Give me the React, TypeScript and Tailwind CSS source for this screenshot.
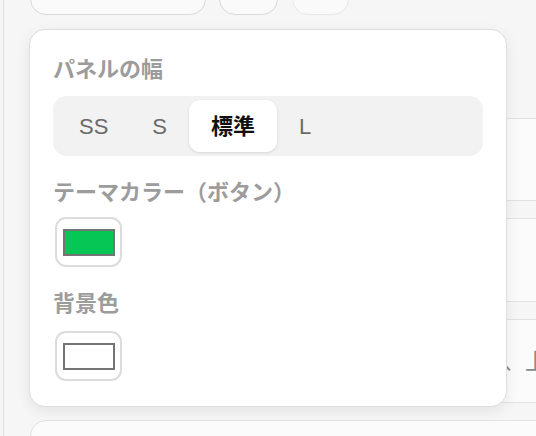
import React from 'react';

const SIZES = ['SS', 'S', '標準', 'L'];

const FONT = { fontFamily: '"Liberation Sans", "Noto Sans CJK JP", sans-serif' };

function Swatch({ color }: { color: string }) {
  return (
    <div className="ml-[2px] flex h-[50px] w-[67px] items-center justify-center rounded-[11px] border-2 border-[#dcdcdc] bg-white">
      <div className={`h-[27px] w-[52px] border-2 border-[#747474] ${color}`} />
    </div>
  );
}

export default function App() {
  const selected = '標準';

  return (
    <div className="relative h-[436px] w-[536px] overflow-hidden bg-[#f6f6f6] pl-[3px]" style={FONT}>
      {/* page behind the popover */}
      <div className="h-[436px] overflow-hidden border-l border-[#e0e0e0] pl-[26px]">
        <div className="-mt-[31px] flex">
          <div className="h-[46px] w-[176px] rounded-[16px] border border-[#d8d8d8] bg-[#fafafa]" />
          <div className="ml-[13px] h-[46px] w-[59px] rounded-[16px] border border-[#d8d8d8] bg-[#fafafa]" />
          <div className="ml-[14px] h-[46px] w-[57px] rounded-[16px] border border-[#e8e8e8] bg-[#fafafa]" />
        </div>
        <div className="mt-[103px] flex w-[560px] flex-col gap-[17px]">
          <div className="h-[83px] rounded-[16px] border border-[#e2e2e2] bg-[#fbfbfb]" />
          <div className="h-[84px] rounded-[16px] border border-[#e2e2e2] bg-[#fbfbfb]" />
          <div className="flex h-[84px] items-center rounded-[16px] border border-[#e2e2e2] bg-[#fbfbfb] pl-[56px]">
            <span className="whitespace-nowrap text-[22px] text-[#8a8a8a]">メッセージの表示や配色を自由に設定でき、上</span>
          </div>
          <div className="h-[84px] rounded-[16px] border border-[#e2e2e2] bg-[#fbfbfb]" />
        </div>
      </div>

      {/* popover */}
      <div className="absolute left-[29px] top-[29px] w-[478px] rounded-[16px] border border-[#dedede] bg-white px-[23px] pb-[25px] pt-[25px] shadow-[0_4px_14px_rgba(0,0,0,0.08)]">
        <p className="text-[22px] font-bold leading-[30px] text-[#9c9c9c]">パネルの幅</p>
        <div className="mt-[11px] flex h-[60px] rounded-[14px] bg-[#f2f2f2] p-[4px]">
          {SIZES.map((s) => (
            <button
              key={s}
              className={
                s === selected
                  ? 'flex h-[52px] items-center rounded-[11px] bg-white px-[22px] text-[22px] font-bold text-[#111] shadow-[0_1px_3px_rgba(0,0,0,0.12)]'
                  : 'flex h-[52px] items-center px-[22px] text-[22px] text-[#6a6a6a]'
              }
            >
              {s}
            </button>
          ))}
        </div>

        <p className="mt-[22px] text-[22px] font-bold leading-[30px] text-[#9c9c9c]">テーマカラー（ボタン）</p>
        <div className="mt-[9px]">
          <Swatch color="bg-[#06c755]" />
        </div>

        <p className="mt-[22px] text-[22px] font-bold leading-[30px] text-[#9c9c9c]">背景色</p>
        <div className="mt-[12px]">
          <Swatch color="bg-white" />
        </div>
      </div>
    </div>
  );
}
